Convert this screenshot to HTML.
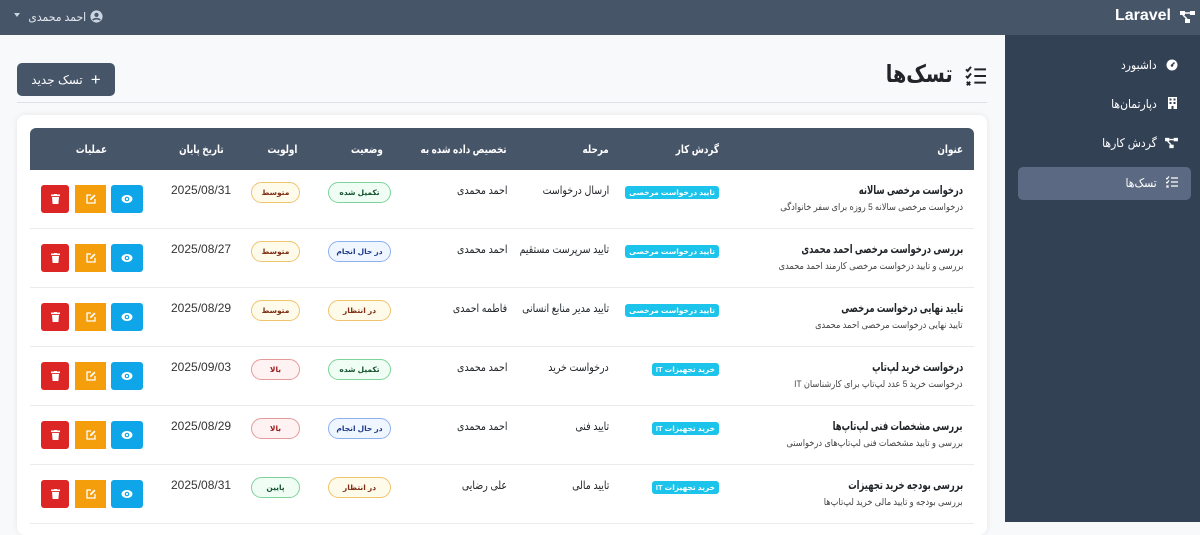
<!DOCTYPE html>
<html><head><meta charset="utf-8"><style>
*{box-sizing:border-box;margin:0;padding:0}
body{width:1200px;height:522px;overflow:hidden;background:#f8f9fa;font-family:"Liberation Sans","DejaVu Sans",sans-serif;position:relative;color:#212529}
.nav{position:absolute;left:0;top:0;width:1200px;height:35px;background:#475569}
.side{position:absolute;left:1005px;top:35px;width:195px;height:487px;background:#334155}
.abs{position:absolute}
.si{position:absolute;right:43px;color:#fff;font-size:12px;direction:rtl;white-space:nowrap;transform:scaleX(.9);transform-origin:right center}
.card{position:absolute;left:17px;top:115px;width:970px;height:420px;background:#fff;border-radius:8px;box-shadow:0 0 6px rgba(0,0,0,.08)}
.th{position:absolute;left:30px;top:128px;width:944px;height:42px;background:#475569;border-radius:6px 6px 0 0}
.h{position:absolute;top:143px;color:#fff;font-size:11px;font-weight:bold;direction:rtl;white-space:nowrap;transform:scaleX(.8);transform-origin:right center}
.r{position:absolute;white-space:nowrap;direction:rtl;transform-origin:right center}
.sep{position:absolute;left:30px;width:944px;height:1px;background:#e9ecef}
.wf{position:absolute;height:13px;line-height:13px;background:#1cc3ea;color:#fff;font-size:7.5px;font-weight:bold;border-radius:3px;padding:0 4px;direction:rtl;white-space:nowrap}
.pill{position:absolute;height:21px;line-height:19px;border:1px solid;border-radius:11px;font-size:7.5px;font-weight:bold;text-align:center;direction:rtl}
.y{border-color:#f0c36d;background:#fffbeb;color:#7c2d12}
.g{border-color:#7dd39a;background:#f0fdf4;color:#14532d}
.b{border-color:#8fb0ef;background:#eff6ff;color:#1e3a8a}
.rd{border-color:#e59a9a;background:#fef2f2;color:#991b1b}
.btn{position:absolute;height:28px;display:flex;align-items:center;justify-content:center}
</style></head><body>
<div class="nav"></div>
<div class="abs" style="left:14px;top:13px;width:0;height:0;border-left:3px solid transparent;border-right:3px solid transparent;border-top:4px solid #cbd5e1"></div>
<div class="abs" style="right:1114px;top:10px;color:#e2e8f0;font-size:12px;direction:rtl;white-space:nowrap;transform:scaleX(.9);transform-origin:right center">احمد محمدی</div>
<svg class="abs" style="left:90px;top:10px" width="13" height="13" viewBox="0 0 16 16"><circle cx="8" cy="8" r="7.5" fill="#cbd5e1"/><circle cx="8" cy="6" r="2.6" fill="#475569"/><path d="M3.5 12.5c1.5-2.5 7.5-2.5 9 0" stroke="#475569" stroke-width="2" fill="none"/></svg>
<div class="abs" style="right:29px;top:7px;color:#fff;font-size:16px;font-weight:bold">Laravel</div>
<svg class="abs" style="left:1180px;top:10px" width="15" height="14" viewBox="0 0 15 14"><rect x="0" y="1" width="5" height="4" fill="#fff"/><rect x="10" y="1" width="5" height="4" fill="#fff"/><rect x="5" y="9" width="5" height="4" fill="#fff"/><path d="M5 3h5M3 5l4 4" stroke="#fff" stroke-width="1.5"/></svg>

<div class="side"></div>
<div class="abs" style="left:1018px;top:167px;width:173px;height:33px;background:#5b6a82;border-radius:5px"></div>
<svg class="abs" style="left:1166px;top:59px" width="12" height="12" viewBox="0 0 12 12"><circle cx="6" cy="6" r="5.5" fill="#fff"/><path d="M6 6L8.5 3.5" stroke="#334155" stroke-width="1.5"/><circle cx="6" cy="6.5" r="1.3" fill="#334155"/></svg>
<div class="si" style="top:58px">داشبورد</div>
<svg class="abs" style="left:1168px;top:97px" width="9" height="12" viewBox="0 0 9 12"><rect width="9" height="12" fill="#fff"/><g fill="#334155"><rect x="1.5" y="1.5" width="2" height="2"/><rect x="5.5" y="1.5" width="2" height="2"/><rect x="1.5" y="5" width="2" height="2"/><rect x="5.5" y="5" width="2" height="2"/><rect x="3.5" y="9" width="2" height="3"/></g></svg>
<div class="si" style="top:97px">دپارتمان‌ها</div>
<svg class="abs" style="left:1165px;top:137px" width="13" height="12" viewBox="0 0 15 14"><rect x="0" y="1" width="5" height="4" fill="#fff"/><rect x="10" y="1" width="5" height="4" fill="#fff"/><rect x="5" y="9" width="5" height="4" fill="#fff"/><path d="M5 3h5M3 5l4 4" stroke="#fff" stroke-width="1.5"/></svg>
<div class="si" style="top:136px">گردش کارها</div>
<svg class="abs" style="left:1166px;top:176px" width="12" height="12" viewBox="0 0 12 12"><path d="M5 2h7M5 6h7M5 10h7M0 2l1 1 2-2.5M0 6l1 1 2-2.5M0.5 9.5l2 2M2.5 9.5l-2 2" stroke="#fff" stroke-width="1.2" fill="none"/></svg>
<div class="si" style="top:176px">تسک‌ها</div>

<svg class="abs" style="left:965px;top:66px" width="22" height="20" viewBox="0 0 12 12"><path d="M5 2h7M5 6h7M5 10h7M0 2l1 1 2-2.5M0 6l1 1 2-2.5M0.5 9.5l2 2M2.5 9.5l-2 2" stroke="#212529" stroke-width="1.2" fill="none"/></svg>
<div class="abs" style="right:247px;top:60px;font-size:24px;font-weight:bold;direction:rtl;color:#212529;white-space:nowrap;transform:scaleX(.8);transform-origin:right center">تسک‌ها</div>
<div class="abs" style="left:17px;top:63px;width:98px;height:33px;background:#475569;border-radius:5px;color:#fff;font-size:12px;direction:rtl;display:flex;align-items:center;justify-content:center;gap:8px"><span style="font-size:17px;font-weight:300">+</span><span>تسک جدید</span></div>
<div class="abs" style="left:17px;top:102px;width:970px;height:1px;background:#dee2e6"></div>

<div class="card"></div>
<div class="th"></div>
<div class="h" style="right:237px">عنوان</div>
<div class="h" style="right:481px">گردش کار</div>
<div class="h" style="right:591px">مرحله</div>
<div class="h" style="right:693px">تخصیص داده شده به</div>
<div class="h" style="right:817px">وضعیت</div>
<div class="h" style="right:903px">اولویت</div>
<div class="h" style="right:976px">تاریخ پایان</div>
<div class="h" style="right:1093px">عملیات</div>

<div id="rows"></div>
<script>
var rows=[
["درخواست مرخصی سالانه","درخواست مرخصی سالانه 5 روزه برای سفر خانوادگی","تایید درخواست مرخصی","ارسال درخواست","احمد محمدی",["تکمیل شده","g"],["متوسط","y"],"2025/08/31"],
["بررسی درخواست مرخصی احمد محمدی","بررسی و تایید درخواست مرخصی کارمند احمد محمدی","تایید درخواست مرخصی","تایید سرپرست مستقیم","احمد محمدی",["در حال انجام","b"],["متوسط","y"],"2025/08/27"],
["تایید نهایی درخواست مرخصی","تایید نهایی درخواست مرخصی احمد محمدی","تایید درخواست مرخصی","تایید مدیر منابع انسانی","فاطمه احمدی",["در انتظار","y"],["متوسط","y"],"2025/08/29"],
["درخواست خرید لپ‌تاپ","درخواست خرید 5 عدد لپ‌تاپ برای کارشناسان IT","خرید تجهیزات IT","درخواست خرید","احمد محمدی",["تکمیل شده","g"],["بالا","rd"],"2025/09/03"],
["بررسی مشخصات فنی لپ‌تاپ‌ها","بررسی و تایید مشخصات فنی لپ‌تاپ‌های درخواستی","خرید تجهیزات IT","تایید فنی","احمد محمدی",["در حال انجام","b"],["بالا","rd"],"2025/08/29"],
["بررسی بودجه خرید تجهیزات","بررسی بودجه و تایید مالی خرید لپ‌تاپ‌ها","خرید تجهیزات IT","تایید مالی","علی رضایی",["در انتظار","y"],["پایین","g"],"2025/08/31"]];
var h="";
rows.forEach(function(r,i){var t=170+i*59;
h+='<div class="r" style="right:237px;top:'+(t+13)+'px;font-size:12px;font-weight:bold;transform:scaleX(.7)">'+r[0]+'</div>';
h+='<div class="r" style="right:237px;top:'+(t+32)+'px;font-size:9.5px;color:#444;transform:scaleX(.87)">'+r[1]+'</div>';
h+='<div class="wf" style="right:481px;top:'+(t+16)+'px">'+r[2]+'</div>';
h+='<div class="r" style="right:591px;top:'+(t+13)+'px;font-size:11.5px;transform:scaleX(.82)">'+r[3]+'</div>';
h+='<div class="r" style="right:693px;top:'+(t+13)+'px;font-size:11.5px;transform:scaleX(.82)">'+r[4]+'</div>';
h+='<div class="pill '+r[5][1]+'" style="left:328px;width:63px;top:'+(t+12)+'px">'+r[5][0]+'</div>';
h+='<div class="pill '+r[6][1]+'" style="left:251px;width:49px;top:'+(t+12)+'px">'+r[6][0]+'</div>';
h+='<div class="r" style="left:171px;top:'+(t+13)+'px;font-size:12px;color:#333;direction:ltr">'+r[7]+'</div>';
h+='<div class="btn" style="left:41px;width:28px;top:'+(t+15)+'px;background:#dc2626;border-radius:3px"><svg width="9" height="10" viewBox="0 0 9 10"><rect x="0" y="0.5" width="9" height="1.6" fill="#fff"/><rect x="3" y="0" width="3" height="1" fill="#fff"/><path d="M1 3h7l-.6 7H1.6z" fill="#fff"/></svg></div>';
h+='<div class="btn" style="left:75px;width:31px;top:'+(t+15)+'px;background:#f59e0b"><svg width="10" height="10" viewBox="0 0 10 10"><path d="M5 1H1v8h8V5" stroke="#fff" stroke-width="1.3" fill="none"/><path d="M4 6l.3-1.6L8.3.5l1.2 1.2L5.6 5.7z" fill="#fff"/></svg></div>';
h+='<div class="btn" style="left:111px;width:32px;top:'+(t+15)+'px;background:#0ea5e9;border-radius:3px"><svg width="12" height="10" viewBox="0 0 12 10"><ellipse cx="6" cy="5" rx="5.5" ry="4" fill="#fff"/><circle cx="6" cy="5" r="2.3" fill="#0ea5e9"/><circle cx="6" cy="5" r="1.1" fill="#fff"/></svg></div>';
h+='<div class="sep" style="top:'+(t+58)+'px"></div>';
});
document.getElementById("rows").innerHTML=h;
</script>
</body></html>
